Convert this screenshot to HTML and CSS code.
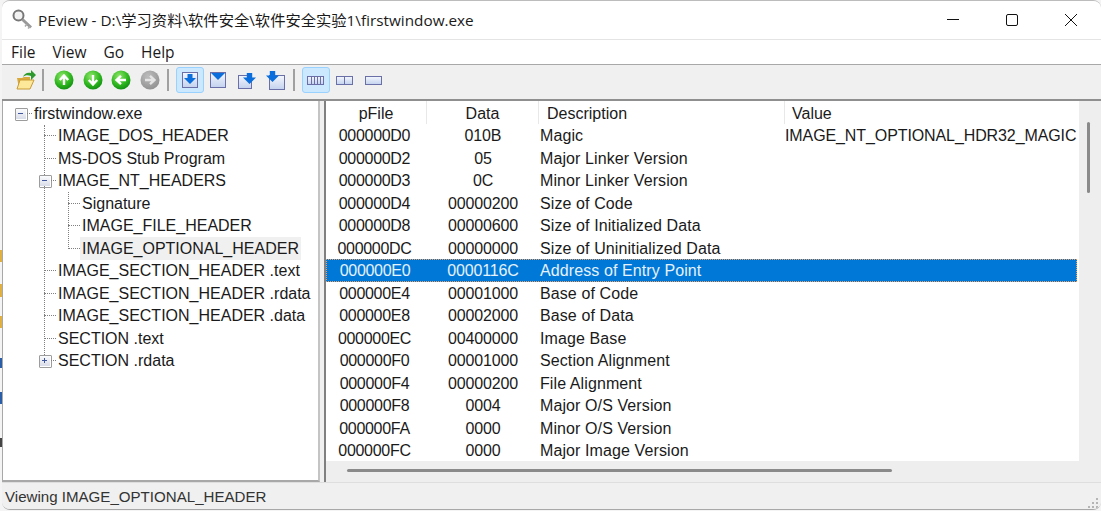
FILE: index.html
```html
<!DOCTYPE html>
<html lang="en">
<head>
  <meta charset="UTF-8">
  <title>PEview</title>
  <link rel="stylesheet" href="styles.css">
</head>
<body>
  <svg class="defs" width="0" height="0">
    <defs>
      <radialGradient id="green" cx="40%" cy="30%" r="75%">
        <stop offset="0" stop-color="#8fe66a"/>
        <stop offset="0.6" stop-color="#2fb81f"/>
        <stop offset="1" stop-color="#0f8a12"/>
      </radialGradient>
      <radialGradient id="grey" cx="40%" cy="30%" r="75%">
        <stop offset="0" stop-color="#bdbdbd"/>
        <stop offset="1" stop-color="#8f8f8f"/>
      </radialGradient>
      <linearGradient id="paper" x1="0" y1="0" x2="0" y2="1">
        <stop offset="0" stop-color="#f4f7fd"/>
        <stop offset="1" stop-color="#c3d2ee"/>
      </linearGradient>
      <symbol id="arrow-up" viewBox="0 0 20 20">
        <circle cx="10" cy="10" r="9.5" fill="url(#green)"/>
        <path d="M10 15V6M5.8 10 10 5.5l4.2 4.5" fill="none" stroke="#fff" stroke-width="2.4"/>
      </symbol>
      <symbol id="arrow-down" viewBox="0 0 20 20">
        <circle cx="10" cy="10" r="9.5" fill="url(#green)"/>
        <path d="M10 5v9M5.8 10 10 14.5l4.2-4.5" fill="none" stroke="#fff" stroke-width="2.4"/>
      </symbol>
      <symbol id="arrow-left" viewBox="0 0 20 20">
        <circle cx="10" cy="10" r="9.5" fill="url(#green)"/>
        <path d="M15 10H6M10 5.8 5.5 10l4.5 4.2" fill="none" stroke="#fff" stroke-width="2.4"/>
      </symbol>
      <symbol id="arrow-right" viewBox="0 0 20 20">
        <circle cx="10" cy="10" r="9.5" fill="url(#grey)"/>
        <path d="M5 10h9M10 5.8l4.5 4.2-4.5 4.2" fill="none" stroke="#e4e4e4" stroke-width="2.4"/>
      </symbol>
      <symbol id="blue-arrow" viewBox="0 0 12 10">
        <path d="M3.5 0h5v4H12L6 10 0 4h3.5z" fill="#0a6fdc"/>
      </symbol>
    </defs>
  </svg>

  <div class="desktop-edge"></div>

  <div class="window">
    <div class="titlebar">
      <svg class="app-icon" width="22" height="22" viewBox="0 0 22 22">
        <circle cx="7.5" cy="7.5" r="5" fill="#f2f2f2" stroke="#777" stroke-width="2"/>
        <path d="M11.5 11.5 20 19.5" stroke="#999" stroke-width="3"/>
        <path d="M16 16l-2 2.5M19 18.5l-2 2" stroke="#aaa" stroke-width="1.5"/>
      </svg>
      <span class="title-text">PEview - D:\学习资料\软件安全\软件安全实验1\firstwindow.exe</span>
      <div class="caption-buttons">
        <svg class="caption-btn" width="12" height="12" viewBox="0 0 12 12"><path d="M0 5.5h12" stroke="#111"/></svg>
        <svg class="caption-btn" width="12" height="12" viewBox="0 0 12 12"><rect x="0.5" y="0.5" width="11" height="11" rx="1.5" fill="none" stroke="#111"/></svg>
        <svg class="caption-btn" width="12" height="12" viewBox="0 0 12 12"><path d="M0 0l12 12M12 0 0 12" stroke="#111"/></svg>
      </div>
    </div>

    <div class="menubar">
      <span>File</span>
      <span>View</span>
      <span>Go</span>
      <span>Help</span>
    </div>

    <div class="toolbar">
      <div class="tool">
        <svg class="folder" width="22" height="22" viewBox="0 0 22 22">
          <path d="M2 9h5l2-1h6v11H4z" fill="#d9a93c"/>
          <path d="M2 20 5 11h14l-4 9z" fill="#fde89a" stroke="#c99a35"/>
          <path d="M8 8c1-3 4-5 8-4V1l5 5-5 5V7c-3-1-6-1-8 1z" fill="#2d9a2d"/>
        </svg>
      </div>
      <div class="tool-sep"></div>
      <div class="tool"><svg width="20" height="20"><use href="#arrow-up"/></svg></div>
      <div class="tool"><svg width="20" height="20"><use href="#arrow-down"/></svg></div>
      <div class="tool"><svg width="20" height="20"><use href="#arrow-left"/></svg></div>
      <div class="tool"><svg width="20" height="20"><use href="#arrow-right"/></svg></div>
      <div class="tool-sep"></div>
      <div class="tool active">
        <svg width="18" height="18" viewBox="0 0 18 18">
          <rect x="1.5" y="1.5" width="15" height="15" fill="url(#paper)" stroke="#6a6fa8"/>
          <use href="#blue-arrow" x="3" y="3" width="12" height="10"/>
        </svg>
      </div>
      <div class="tool">
        <svg class="nudge-left" width="18" height="18" viewBox="0 0 18 18">
          <rect x="1.5" y="1.5" width="15" height="15" fill="url(#paper)" stroke="#6a6fa8"/>
          <path d="M2 2h14L9 9z" fill="#0a6fdc"/>
        </svg>
      </div>
      <div class="tool">
        <svg width="20" height="20" viewBox="0 0 20 20">
          <rect x="1.5" y="5.5" width="13" height="13" fill="url(#paper)" stroke="#6a6fa8"/>
          <use href="#blue-arrow" x="6" y="3" width="13" height="11"/>
        </svg>
      </div>
      <div class="tool">
        <svg width="20" height="22" viewBox="0 0 20 22">
          <rect x="3.5" y="6.5" width="15" height="14" fill="url(#paper)" stroke="#6a6fa8"/>
          <use href="#blue-arrow" x="0" y="0" width="13" height="15"/>
        </svg>
      </div>
      <div class="tool-sep"></div>
      <div class="tool active">
        <svg width="17" height="9" viewBox="0 0 17 9">
          <rect x="0.5" y="0.5" width="16" height="8" fill="url(#paper)" stroke="#6a6fa8"/>
          <path d="M4.5 1v7M7.5 1v7M10.5 1v7M13.5 1v7" stroke="#6a6fa8"/>
        </svg>
      </div>
      <div class="tool">
        <svg width="17" height="9" viewBox="0 0 17 9">
          <rect x="0.5" y="0.5" width="16" height="8" fill="url(#paper)" stroke="#6a6fa8"/>
          <path d="M8.5 1v7" stroke="#6a6fa8"/>
        </svg>
      </div>
      <div class="tool">
        <svg width="17" height="9" viewBox="0 0 17 9">
          <rect x="0.5" y="0.5" width="16" height="8" fill="url(#paper)" stroke="#6a6fa8"/>
        </svg>
      </div>
    </div>

    <div class="panes">
      <div class="tree">
        <div class="tree-row"><i class="box minus"></i><span class="label">firstwindow.exe</span></div>
        <div class="tree-group">
          <div class="tree-row"><i class="dash"></i><span class="label">IMAGE_DOS_HEADER</span></div>
          <div class="tree-row"><i class="dash"></i><span class="label">MS-DOS Stub Program</span></div>
          <div class="tree-row"><i class="box minus"></i><span class="label">IMAGE_NT_HEADERS</span></div>
          <div class="tree-group">
            <div class="tree-row"><i class="dash"></i><span class="label">Signature</span></div>
            <div class="tree-row"><i class="dash"></i><span class="label">IMAGE_FILE_HEADER</span></div>
            <div class="tree-row"><i class="dash"></i><span class="label current">IMAGE_OPTIONAL_HEADER</span></div>
          </div>
          <div class="tree-row"><i class="dash"></i><span class="label">IMAGE_SECTION_HEADER .text</span></div>
          <div class="tree-row"><i class="dash"></i><span class="label">IMAGE_SECTION_HEADER .rdata</span></div>
          <div class="tree-row"><i class="dash"></i><span class="label">IMAGE_SECTION_HEADER .data</span></div>
          <div class="tree-row"><i class="dash"></i><span class="label">SECTION .text</span></div>
          <div class="tree-row"><i class="box plus"></i><span class="label">SECTION .rdata</span></div>
        </div>
      </div>

      <div class="list-pane">
        <div class="list-top">
          <div class="list">
            <div class="list-head">
              <div class="head-cell c-pfile">pFile</div>
              <div class="head-cell c-data">Data</div>
              <div class="head-cell c-desc">Description</div>
              <div class="head-cell c-value">Value</div>
            </div>
            <div class="row"><span class="c-pfile">000000D0</span><span class="c-data">010B</span><span class="c-desc">Magic</span><span class="c-value">IMAGE_NT_OPTIONAL_HDR32_MAGIC</span></div>
            <div class="row"><span class="c-pfile">000000D2</span><span class="c-data">05</span><span class="c-desc">Major Linker Version</span></div>
            <div class="row"><span class="c-pfile">000000D3</span><span class="c-data">0C</span><span class="c-desc">Minor Linker Version</span></div>
            <div class="row"><span class="c-pfile">000000D4</span><span class="c-data">00000200</span><span class="c-desc">Size of Code</span></div>
            <div class="row"><span class="c-pfile">000000D8</span><span class="c-data">00000600</span><span class="c-desc">Size of Initialized Data</span></div>
            <div class="row"><span class="c-pfile">000000DC</span><span class="c-data">00000000</span><span class="c-desc">Size of Uninitialized Data</span></div>
            <div class="row selected"><span class="c-pfile">000000E0</span><span class="c-data">0000116C</span><span class="c-desc">Address of Entry Point</span></div>
            <div class="row"><span class="c-pfile">000000E4</span><span class="c-data">00001000</span><span class="c-desc">Base of Code</span></div>
            <div class="row"><span class="c-pfile">000000E8</span><span class="c-data">00002000</span><span class="c-desc">Base of Data</span></div>
            <div class="row"><span class="c-pfile">000000EC</span><span class="c-data">00400000</span><span class="c-desc">Image Base</span></div>
            <div class="row"><span class="c-pfile">000000F0</span><span class="c-data">00001000</span><span class="c-desc">Section Alignment</span></div>
            <div class="row"><span class="c-pfile">000000F4</span><span class="c-data">00000200</span><span class="c-desc">File Alignment</span></div>
            <div class="row"><span class="c-pfile">000000F8</span><span class="c-data">0004</span><span class="c-desc">Major O/S Version</span></div>
            <div class="row"><span class="c-pfile">000000FA</span><span class="c-data">0000</span><span class="c-desc">Minor O/S Version</span></div>
            <div class="row"><span class="c-pfile">000000FC</span><span class="c-data">0000</span><span class="c-desc">Major Image Version</span></div>
          </div>
          <div class="vscroll"><div class="vthumb"></div></div>
        </div>
        <div class="hscroll"><div class="hthumb"></div></div>
      </div>
    </div>

    <div class="statusbar">
      <span>Viewing IMAGE_OPTIONAL_HEADER</span>
      <svg class="grip" width="12" height="12" viewBox="0 0 12 12">
        <path d="M9 1h2v2H9zM5 5h2v2H5zM9 5h2v2H9zM1 9h2v2H1zM5 9h2v2H5zM9 9h2v2H9z" fill="#b5b5b5"/>
      </svg>
    </div>
  </div>
</body>
</html>
```

FILE: styles.css
```css
* {
  box-sizing: border-box;
}

html, body {
  margin: 0;
  height: 100%;
  overflow: hidden;
}

body {
  display: flex;
  background: #f4f4f4;
  font-family: "Liberation Sans", Arial, sans-serif;
  font-size: 16px;
  color: #1a1a1a;
}

.defs {
  position: absolute;
}

/* bits of the desktop showing left of the window */
.desktop-edge {
  width: 2px;
  flex: none;
  background:
    linear-gradient(#e0b040, #e0b040) 0 250px / 2px 12px no-repeat,
    linear-gradient(#e0b040, #e0b040) 0 284px / 2px 13px no-repeat,
    linear-gradient(#e0b040, #e0b040) 0 316px / 2px 12px no-repeat,
    linear-gradient(#2a5fa8, #2a5fa8) 0 358px / 2px 10px no-repeat,
    linear-gradient(#2a5fa8, #2a5fa8) 0 392px / 2px 12px no-repeat,
    linear-gradient(#444, #444) 0 438px / 2px 9px no-repeat;
}

.window {
  flex: 1;
  display: flex;
  flex-direction: column;
  height: 510px;
  background: #f0f0f0;
  border-top: 1px solid #bcbcbc;
  border-bottom: 1px solid #a8a8a8;
  border-radius: 8px;
  overflow: hidden;
}

/* title bar */
.titlebar {
  display: flex;
  align-items: center;
  height: 39px;
  padding: 0 0 2px 9px;
  background: #fff;
  border-bottom: 1px solid #e4e4e4;
}

.app-icon {
  flex: none;
}

.title-text {
  margin-left: 5px;
  font-family: "Open Sans", "Noto Sans CJK SC", sans-serif;
  font-size: 15.3px;
  white-space: nowrap;
}

.caption-buttons {
  margin: 2px 0 0 auto;
  display: flex;
  align-items: center;
  gap: 47px;
  padding-right: 24px;
}

.caption-btn {
  display: block;
}

/* menu */
.menubar {
  display: flex;
  gap: 17px;
  height: 25px;
  padding: 0 9px;
  align-items: center;
  background: #fff;
  border-bottom: 1px solid #a8a8a8;
  font-family: "Open Sans", sans-serif;
  font-size: 15.5px;
}

/* toolbar */
.toolbar {
  display: flex;
  align-items: center;
  height: 36px;
  padding: 0 0 4px 8.7px;
  background: #f0f0f0;
  border-bottom: 2px solid #8f8f8f;
}

.tool {
  width: 28.6px;
  height: 26px;
  display: flex;
  align-items: center;
  justify-content: center;
  border: 1px solid transparent;
  border-radius: 3px;
}

.tool.active {
  margin-left: 1px;
  background: #cce8ff;
  border-color: #99d1ff;
}

.folder {
  margin-left: 2px;
}

.nudge-left {
  margin-left: -2px;
}

.tool-sep {
  width: 2px;
  height: 22px;
  margin: 0 5.5px 0 3px;
  background: #a0a0a0;
}

/* panes */
.panes {
  flex: 1;
  display: flex;
  min-height: 0;
  gap: 4px;
  border-bottom: 1px solid #dedede;
}

.tree {
  width: 318px;
  background: #fff;
  padding: 1px 0 0 11px;
  border-left: 1px solid #a8a8a8;
  border-right: 2px solid #c4c4c4;
  border-bottom: 2px solid #a8a8a8;
}

.tree-row {
  position: relative;
  display: flex;
  align-items: center;
  height: 22.5px;
  white-space: nowrap;
}

.tree-group {
  position: relative;
  padding-left: 24px;
}

/* dotted vertical connector */
.tree-group::before {
  content: "";
  position: absolute;
  left: 30px;
  top: 0;
  bottom: 11px;
  border-left: 1px dotted #808080;
}

.dash, .box {
  flex: none;
  width: 18px;
  height: 11px;
  position: relative;
}

.dash::before {
  content: "";
  position: absolute;
  left: 6px;
  right: 0;
  top: 5px;
  border-top: 1px dotted #808080;
}

.box::before {
  content: "";
  position: absolute;
  left: 1px;
  top: 0;
  width: 11px;
  height: 11px;
  border: 1px solid #9c9c9c;
  border-radius: 1px;
}

.box::after {
  content: "";
  position: absolute;
  left: 13px;
  right: 0;
  top: 5px;
  border-top: 1px dotted #808080;
}

.minus {
  background:
    linear-gradient(#3f569f, #3f569f) 4px 5px / 5px 1px no-repeat,
    linear-gradient(#fff, #d8dce8) 1px 0 / 11px 11px no-repeat;
}

.plus {
  background:
    linear-gradient(#3f569f, #3f569f) 4px 5px / 5px 1px no-repeat,
    linear-gradient(#3f569f, #3f569f) 6px 3px / 1px 5px no-repeat,
    linear-gradient(#fff, #d8dce8) 1px 0 / 11px 11px no-repeat;
}

.label {
  padding: 0 2px;
  line-height: 23px;
}

.label.current {
  background: #f0f0f0;
}

/* list */
.list-pane {
  flex: 1;
  min-width: 0;
  display: flex;
  flex-direction: column;
  border-left: 2px solid #808080;
}

.list-top {
  flex: 1;
  display: flex;
  min-height: 0;
}

.list {
  flex: 1;
  min-width: 0;
  background: #fff;
  overflow: hidden;
}

.list-head {
  display: flex;
  height: 23.25px;
}

.head-cell {
  height: 100%;
  line-height: 25px;
  border-right: 1px solid #e8e8e8;
}

.row {
  display: flex;
  height: 22.5px;
  line-height: 23px;
  white-space: nowrap;
}

.row.selected {
  margin-right: 2px;
  background: #0078d7;
  color: #e6f2fb;
  border: 1px dotted #f0a060;
  line-height: 21px;
}

.row.selected .c-pfile {
  width: 100px;
}

.c-pfile {
  width: 101px;
  flex: none;
  text-align: center;
}

.row .c-pfile {
  padding-right: 4px;
  letter-spacing: -0.3px;
}

.c-data {
  width: 112px;
  flex: none;
  text-align: center;
}

.row .c-data {
  letter-spacing: -0.15px;
}

.c-desc {
  width: 246px;
  flex: none;
  padding-left: 1px;
}

.row .c-desc {
  letter-spacing: 0.1px;
}

.head-cell.c-desc {
  padding-left: 8px;
}

.c-value {
  flex: 1;
}

.row .c-value {
  letter-spacing: -0.1px;
}

.head-cell.c-value {
  padding-left: 7px;
  border-right: none;
}

.vscroll {
  width: 22px;
  flex: none;
  background: #eeeeee;
  padding: 21px 0 0 8px;
}

.vthumb {
  width: 3px;
  height: 71px;
  background: #8a8a8a;
  border-radius: 2px;
}

.hscroll {
  height: 21px;
  flex: none;
  background: #eeeeee;
  padding: 8px 0 0 21px;
}

.hthumb {
  width: 545px;
  height: 3px;
  background: #8a8a8a;
  border-radius: 2px;
}

/* status */
.statusbar {
  display: flex;
  align-items: center;
  justify-content: space-between;
  height: 26px;
  padding: 1px 2px 0 3px;
  background: #f0f0f0;
  font-size: 15.1px;
  color: #333;
}

.grip {
  align-self: flex-end;
}
```
